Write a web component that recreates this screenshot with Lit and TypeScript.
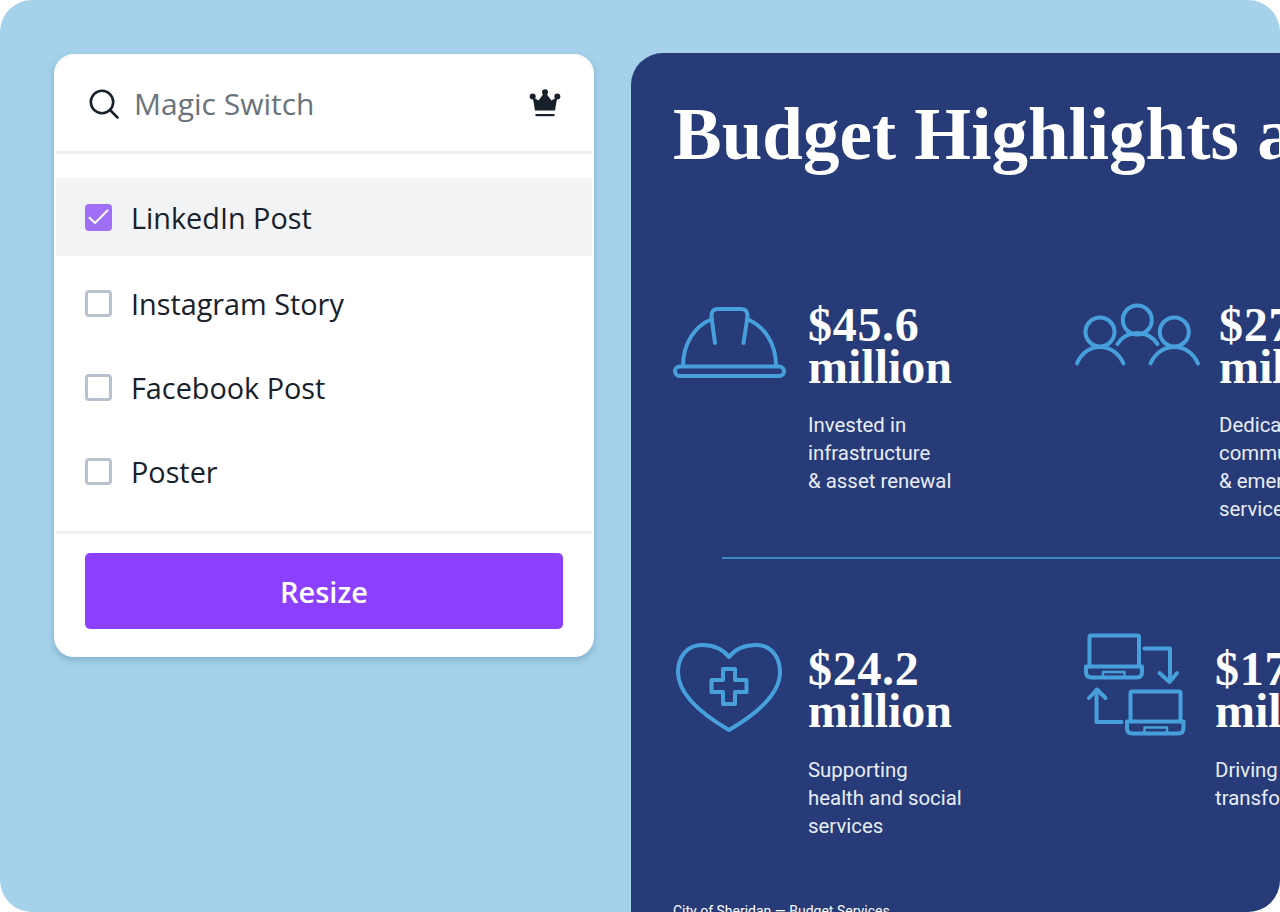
import { LitElement, html, css, svg } from "lit";
import { customElement } from "lit/decorators.js";

const helmet = svg`<svg class="ic" width="135" height="90" viewBox="673 304 135 90" fill="none" stroke="currentColor" stroke-width="4" stroke-linecap="round" stroke-linejoin="round">
  <rect x="675" y="366.5" width="109" height="9.5" rx="4.7"/>
  <path d="M683 366 C683 343 695 326 712 319 M747 319 C764 326 776 343 776 366"/>
  <path d="M715 343 L711.5 317 Q711 309 718 309 L741 309 Q748 309 747.5 317 L743.5 343"/>
</svg>`;
const people = svg`<svg class="ic" width="144" height="90" viewBox="1075 304 144 90" fill="none" stroke="currentColor" stroke-width="4" stroke-linecap="round" stroke-linejoin="round">
  <circle cx="1100" cy="332" r="14.5"/><circle cx="1137.3" cy="320" r="14.5"/><circle cx="1174.3" cy="332" r="14.5"/>
  <path d="M1077 363.5 C1081 353 1090 347 1100 347 C1110 347 1119 353 1123.5 363.5"/>
  <path d="M1117.5 344 C1122 337 1129 333 1137.3 333 C1145.6 333 1152.6 337 1157.5 344"/>
  <path d="M1150.5 363.5 C1155 353 1164 347 1174.3 347 C1184.6 347 1193.6 353 1198 363.5"/>
</svg>`;
const heart = svg`<svg class="ic" width="135" height="100" viewBox="673 647 135 100" fill="none" stroke="currentColor" stroke-width="4" stroke-linejoin="round">
  <path d="M729 656 C722 647 711 644 702 644 C687 644 678 656 678 671 C678 695 705 715 729 729 C753 715 780 695 780 671 C780 656 771 644 756 644 C747 644 736 647 729 656Z"/>
  <path d="M723 668 H735 V679 H746.5 V691 H735 V703 H723 V691 H711.5 V679 H723Z"/>
</svg>`;
const laptops = svg`<svg class="ic" width="140" height="110" viewBox="1075 647 140 110" fill="none" stroke="currentColor" stroke-width="4" stroke-linecap="round" stroke-linejoin="round">
  <path d="M1089.5 665.5 V636 Q1089.5 634.5 1091 634.5 H1137.5 Q1139 634.5 1139 636 V665.5"/>
  <path d="M1086 665.5 H1142 V671 Q1142 676.5 1136.5 676.5 H1091.5 Q1086 676.5 1086 671Z"/>
  <path d="M1103 676 V671 H1124.5 V676" stroke-width="2.5"/>
  <path d="M1144.5 647.5 H1170 V680"/><path d="M1159.5 672 L1169.5 681 L1177 672"/>
  <path d="M1130.5 720.5 V692 Q1130.5 690.5 1132 690.5 H1179 Q1180.5 690.5 1180.5 692 V720.5"/>
  <path d="M1127 720.5 H1183.5 V727 Q1183.5 732.5 1178 732.5 H1132.5 Q1127 732.5 1127 727Z"/>
  <path d="M1144.5 732 V726.5 H1167 V732" stroke-width="2.5"/>
  <path d="M1121.5 721 H1096.5 V689"/><path d="M1089 697 L1097 688.5 L1105.5 697"/>
</svg>`;

@customElement("app-root")
export class AppRoot extends LitElement {
  static styles = css`
    :host { display: block; width: 1280px; height: 912px; background: #fff; }
    .stage { width: 1280px; height: 912px; box-sizing: border-box; background: #a5d1ea; border-radius: 32px; overflow: hidden;
      display: flex; align-items: flex-start; gap: 37px; padding: 53px 0 0 54px; }
    .card { flex: none; width: 540px; height: 603px; margin-top: 1px; box-sizing: border-box; background: #fff; border: 2px solid #fbfcfd; border-radius: 20px;
      box-shadow: 0 3px 7px rgba(60,110,150,.35); font-family: "Open Sans", sans-serif; display: flex; flex-direction: column; }
    .search { height: 98px; flex: none; display: flex; align-items: center; padding: 0 31px 0 30px; border-bottom: 3px solid #eef0f4; box-sizing: border-box; }
    .search .q { margin-left: 14px; font-size: 30px; color: #6a737b; flex: 1; }
    .search svg { display: block; flex: none; }
    .list { height: 380px; flex: none; box-sizing: border-box; padding-top: 24px; border-bottom: 3px solid #eef0f4; display: flex; flex-direction: column; }
    .row { height: 84px; flex: none; display: flex; align-items: center; padding-left: 29px; gap: 19px; font-size: 28.8px; color: #17202b; box-sizing: border-box; }
    .row.on { height: 78px; margin-bottom: 5px; background: #f2f3f5; }
    .box { width: 27px; height: 27px; flex: none; box-sizing: border-box; border: 3px solid #b9c0ce; border-radius: 4px; display: flex; align-items: center; justify-content: center; }
    .row.on .box { background: #a06ff7; border: none; }
    .foot { padding: 19px 29px 0; }
    .btn { height: 76px; background: #8c40ff; border-radius: 5px; color: #fff; font-size: 29px; font-weight: 600; display: flex; align-items: center; justify-content: center; }
    .poster { flex: none; width: 720px; height: 900px; background: #263b78; border-radius: 32px; box-sizing: border-box; padding: 42px 0 0 42px; overflow: hidden; color: #fff; }
    h1 { margin: 0; font: 700 73px/80px "Liberation Serif", serif; white-space: nowrap; }
    .grid { display: grid; grid-template-columns: 402px 1fr; margin-top: 129px; }
    .grid.second { margin-top: 89px; }
    .stat { display: flex; min-width: 0; }
    .ic { display: block; flex: none; color: #47a0dc; overflow: visible; }
    .amt, .unit { font: 700 48px/42px "Liberation Serif", serif; white-space: nowrap; }
    .amt { letter-spacing: .7px; }
    .lab { margin-top: 23px; font: 400 20.4px/28px Roboto, sans-serif; color: #e9edf5; white-space: nowrap; }
    .second .lab { margin-top: 24px; }
    .rule { height: 2px; margin: 34px 0 0 49px; background: #3f86c6; }
    .src { margin-top: 59px; font: 400 14px/24px Roboto, sans-serif; white-space: nowrap; }
  `;

  private row(label: string, on = false) {
    return html`<div class="row ${on ? "on" : ""}"><span class="box">${on ? html`<svg width="27" height="27" viewBox="0 0 27 27" fill="none" stroke="#fff" stroke-width="2" stroke-linecap="round" stroke-linejoin="round"><path d="M4.5 13.7 L10 19 L22.5 6.5"/></svg>` : ""}</span><span>${label}</span></div>`;
  }

  private stat(icon: unknown, num: string, lines: string[]) {
    return html`<div class="stat">${icon}<div><div class="amt">${num}</div><div class="unit">million</div><div class="lab">${lines.map((l) => html`${l}<br />`)}</div></div></div>`;
  }

  render() {
    return html`<div class="stage">
      <section class="card">
        <div class="search">
          <svg width="34" height="34" viewBox="0 0 34 34" fill="none" stroke="#17202b" stroke-width="2.6" stroke-linecap="round"><circle cx="16" cy="15" r="11.2"/><path d="M24 23 L31.5 30.5"/></svg>
          <span class="q">Magic Switch</span>
          <svg width="32" height="30" viewBox="0 0 32 30" fill="#17202b"><circle cx="16" cy="3.2" r="3"/><circle cx="3.7" cy="7.5" r="3"/><circle cx="28.3" cy="7.5" r="3"/><path d="M3.7 8 L9.5 11.5 L16 3 L22.5 11.5 L28.3 8 L26 21.5 H6Z"/><rect x="6.5" y="25" width="19" height="2.2"/></svg>
        </div>
        <div class="list">
          ${this.row("LinkedIn Post", true)}
          ${this.row("Instagram Story")}
          ${this.row("Facebook Post")}
          ${this.row("Poster")}
        </div>
        <div class="foot"><div class="btn">Resize</div></div>
      </section>
      <section class="poster">
        <h1>Budget Highlights at a Glance</h1>
        <div class="grid">
          ${this.stat(helmet, "$45.6", ["Invested in", "infrastructure", "& asset renewal"])}
          ${this.stat(people, "$27.8", ["Dedicated to", "community", "& emergency", "services"])}
        </div>
        <div class="rule"></div>
        <div class="grid second">
          ${this.stat(heart, "$24.2", ["Supporting", "health and social", "services"])}
          ${this.stat(laptops, "$17.5", ["Driving digital", "transformation"])}
        </div>
        <div class="src">City of Sheridan — Budget Services</div>
      </section>
    </div>`;
  }
}
